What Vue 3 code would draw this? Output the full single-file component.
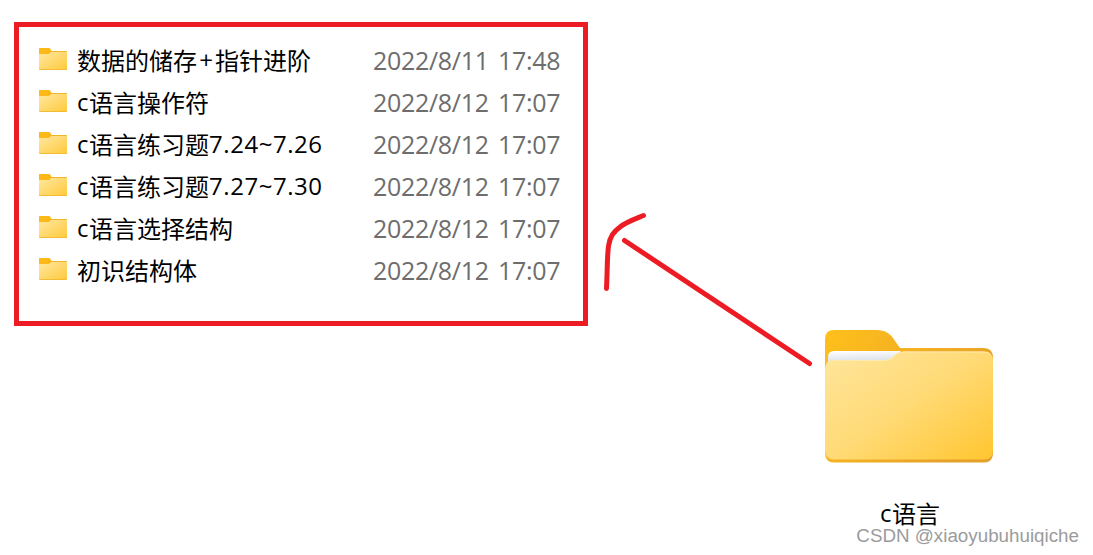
<script setup>
import {ref} from "vue";

const folders = ref([
  {parts: ["数据的储存", "+", "指针进阶"], date: "2022/8/11 17:48"},
  {parts: ["c", "语言操作符"], date: "2022/8/12 17:07"},
  {parts: ["c", "语言练习题", "7.24~7.26"], date: "2022/8/12 17:07"},
  {parts: ["c", "语言练习题", "7.27~7.30"], date: "2022/8/12 17:07"},
  {parts: ["c", "语言选择结构"], date: "2022/8/12 17:07"},
  {parts: ["初识结构体"], date: "2022/8/12 17:07"},
]);

const partClass = (part) => {
  if (part === "c") return "letter";
  if (part === "+") return "plus";
  return /^\d/.test(part) ? "number" : "cjk";
}
</script>

<template>
  <main class="page">
    <ul class="list">
      <li v-for="(folder, index) in folders" :key="index" class="row">
        <svg class="small-icon" viewBox="0 0 28 22">
          <defs>
            <linearGradient :id="'small' + index" x1="0" y1="0" x2="1" y2="1">
              <stop offset="0" stop-color="#ffe8a3" />
              <stop offset="1" stop-color="#ffca3c" />
            </linearGradient>
          </defs>
          <path d="M0 1.2Q0 0 1.2 0H9.4Q10.4 0 11.2 1L12.6 3H27Q28 3 28 4V21Q28 22 27 22H1Q0 22 0 21Z" fill="#f0b429" />
          <path d="M0 1.2Q0 0 1.2 0H9.4Q10.4 0 11.2 1L12.4 3L11 5Q10.3 6 9.4 6H0Z" fill="#fcb918" />
          <path d="M0 6H9.2Q10.4 6 11.2 5L12 4H28V20.2Q28 21.2 27 21.2H1Q0 21.2 0 20.2Z" :fill="'url(#small' + index + ')'" />
        </svg>
        <span class="name"><span v-for="part in folder.parts" :key="part" :class="partClass(part)">{{part}}</span></span>
        <span class="date">{{folder.date}}</span>
      </li>
    </ul>

    <div class="folder">
      <svg class="big-icon" viewBox="0 0 168 133">
        <defs>
          <linearGradient id="back" x1="0" y1="0" x2="1" y2="0.5">
            <stop offset="0" stop-color="#ffc01b" />
            <stop offset="1" stop-color="#e5a02a" />
          </linearGradient>
          <linearGradient id="front" gradientUnits="userSpaceOnUse" x1="20" y1="10" x2="120" y2="155">
            <stop offset="0" stop-color="#ffe69c" />
            <stop offset="0.5" stop-color="#ffda76" />
            <stop offset="1" stop-color="#ffc734" />
          </linearGradient>
          <linearGradient id="paper" x1="0" y1="0" x2="0.15" y2="1">
            <stop offset="0" stop-color="#ffffff" />
            <stop offset="0.7" stop-color="#dde2ea" />
          </linearGradient>
        </defs>
        <path d="M0 9Q0 0 9 0H52Q61 0 66.500 6L75 18H159Q168 18 168 28V123Q168 132.500 159 132.500H9Q0 132.500 0 123Z" fill="url(#back)" />
        <path d="M3 36V27Q3 21 9 21H76L66 32H4Z" fill="url(#paper)" />
        <path d="M0 39Q0 30 9 30H60Q64 30 67 27.500L71 24Q74.500 21.500 79 21.500H159Q168 21.500 168 31V120Q168 129.500 159 129.500H9Q0 129.500 0 120Z" fill="url(#front)" />
        <path d="M2 34Q4 30.500 9 30.500H60Q64 30.500 67 28L71 24.500Q74.500 22 79 22H159Q164 22 166 25" class="edge" />
      </svg>
      <div class="label"><span class="letter">c</span><span class="cjk">语言</span></div>
    </div>

    <!-- hand drawn arrow from the folder to the list -->
    <svg class="arrow" viewBox="0 0 240 180">
      <path d="M53.500 15.500C45 19 36 22 30 27C24 31.500 20 36 18.500 46C17 57 17.500 68 16.500 88.500" />
      <path d="M34.500 40.500L219.500 163.500" />
    </svg>
    <div class="watermark">CSDN @xiaoyubuhuiqiche</div>
  </main>
</template>

<style>
body {
  margin: 0;
  background: #fff;
}
</style>

<style scoped>
.page {
  position: relative;
  display: flex;
  box-sizing: border-box;
  width: 1093px;
  height: 555px;
  padding: 22px 0 0 14px;
  overflow: hidden;
  color: #000;
  font: 24px/40px "Open Sans", "Noto Sans CJK SC", sans-serif;
}
.list {
  box-sizing: border-box;
  width: 574px;
  height: 304px;
  margin: 0;
  padding: 13px 20px;
  border: 5px solid #ed1c24;
  list-style: none;
}
.row {
  display: grid;
  grid-template-columns: 28px 286px 1fr;
  column-gap: 10px;
  height: 42px;
  white-space: nowrap;
}
.small-icon {
  width: 28px;
  height: 22px;
  margin-top: 8px;
}
.name,
.label {
  display: flex;
}
.cjk {
  font-family: "Noto Sans CJK SC", sans-serif;
}
.letter {
  width: 12px;
}
.plus {
  width: 18px;
  text-align: center;
}
.number {
  letter-spacing: 0.55px;
}
.date {
  color: #6d6d6d;
  font-size: 25px;
  letter-spacing: -0.3px;
  word-spacing: 3px;
}
.folder {
  display: flex;
  flex-direction: column;
  align-items: center;
  width: 168px;
  margin: 308px 0 0 237px;
}
.big-icon {
  width: 168px;
  height: 133px;
}
.label {
  margin: 30px 0 0 2px;
}
.edge {
  fill: none;
  stroke: #ffe9ac;
  stroke-width: 1;
}
.arrow {
  position: absolute;
  left: 590px;
  top: 200px;
  width: 240px;
  height: 180px;
  fill: none;
  stroke: #ed1c24;
  stroke-width: 5;
  stroke-linecap: round;
  stroke-linejoin: round;
}
.watermark {
  position: absolute;
  right: 14px;
  bottom: 8px;
  color: #9b9b9b;
  font: 18.8px/22px "Liberation Sans", sans-serif;
}
</style>
